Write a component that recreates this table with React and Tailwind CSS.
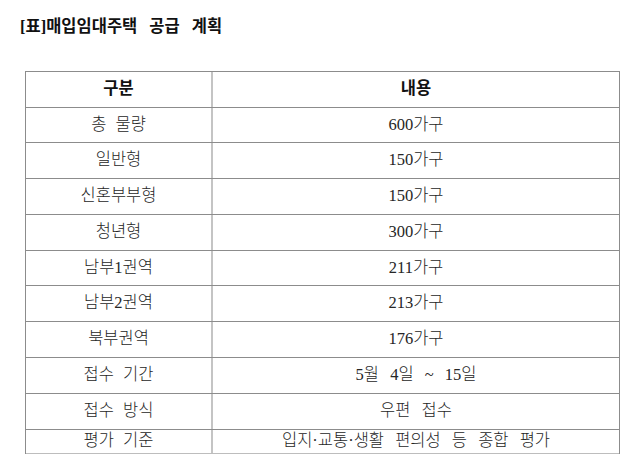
import React from "react";

const rows = [
  ["총 물량", "600가구", 35],
  ["일반형", "150가구", 36],
  ["신혼부부형", "150가구", 36],
  ["청년형", "300가구", 36],
  ["남부1권역", "211가구", 35],
  ["남부2권역", "213가구", 36],
  ["북부권역", "176가구", 36],
  ["접수 기간", "5월 4일 ~ 15일", 36],
  ["접수 방식", "우편 접수", 36],
  ["평가 기준", "입지·교통·생활 편의성 등 종합 평가", 24],
];

const font = { fontFamily: '"Liberation Serif", "Noto Sans CJK KR", serif' };

export default function App() {
  return (
    <div className="w-[640px] h-[455px] bg-white overflow-hidden text-[#262626]" style={font}>
      <div className="pt-[16px] pl-[20px] h-[71px]">
        <div className="text-[16.5px] leading-[22px] font-bold text-[#111] [word-spacing:8px]">
          [표]매입임대주택 공급 계획
        </div>
      </div>
      <div className="ml-[25px] w-[595px] border-t border-l border-r border-[#8c8c8c]">
        <div className="flex h-[36px] border-b border-[#8c8c8c] text-[16.5px] font-bold text-[#111]">
          <div className="w-[187px] border-r-2 border-[#c4c4c4] flex items-center justify-center">구분</div>
          <div className="flex-1 flex items-center justify-center">내용</div>
        </div>
        {rows.map(([a, b, h], i) => (
          <div
            key={i}
            className={
              "flex border-b text-[16.5px] font-light " +
              (i === rows.length - 1 ? "border-[#bdbdbd]" : "border-[#8c8c8c]")
            }
            style={{ height: h }}
          >
            <div className="w-[187px] border-r-2 border-[#c4c4c4] flex items-center justify-center [word-spacing:5px]">
              {a}
            </div>
            <div className="flex-1 flex items-center justify-center [word-spacing:7px]">
              {b}
            </div>
          </div>
        ))}
      </div>
    </div>
  );
}
